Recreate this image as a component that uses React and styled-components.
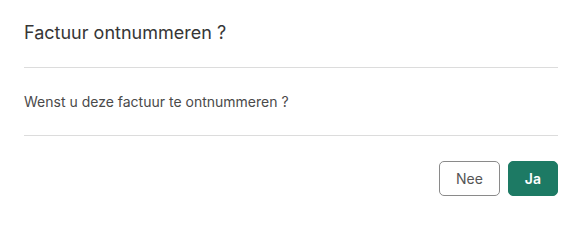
import React from "react";
import styled, { createGlobalStyle } from "styled-components";

const Global = createGlobalStyle`
  body {
    margin: 0;
    background: #fff;
    font-family: Inter, "Noto Sans", sans-serif;
  }
`;

const Dialog = styled.div`
  width: 579px;
  padding: 0 21px 0 24px;
  box-sizing: border-box;
`;

const Header = styled.div`
  padding: 19px 0 21px;
  border-bottom: 1px solid #dcdcdc;
`;

const Title = styled.h2`
  margin: 0;
  font-size: 18px;
  font-weight: 400;
  line-height: 27px;
  color: #363636;
`;

const Body = styled.div`
  padding: 24px 0 23px;
  border-bottom: 1px solid #dcdcdc;
  font-size: 14px;
  line-height: 20px;
  color: #4a4a4a;
`;

const Footer = styled.div`
  display: flex;
  justify-content: flex-end;
  gap: 8px;
  padding-top: 25px;
`;

const Button = styled.button`
  height: 35px;
  padding: 0 16px;
  border-radius: 5px;
  font-family: inherit;
  font-size: 14px;
  font-weight: ${(p) => (p.primary ? 600 : 400)};
  border: 1px solid ${(p) => (p.primary ? "#1d7a64" : "#8a8a8a")};
  background: ${(p) => (p.primary ? "#1d7a64" : "#fff")};
  color: ${(p) => (p.primary ? "#fff" : "#555")};
  cursor: pointer;
`;

export default function App() {
  return (
    <>
      <Global />
      <Dialog>
        <Header>
          <Title>Factuur ontnummeren ?</Title>
        </Header>
        <Body>Wenst u deze factuur te ontnummeren ?</Body>
        <Footer>
          <Button>Nee</Button>
          <Button primary>Ja</Button>
        </Footer>
      </Dialog>
    </>
  );
}
